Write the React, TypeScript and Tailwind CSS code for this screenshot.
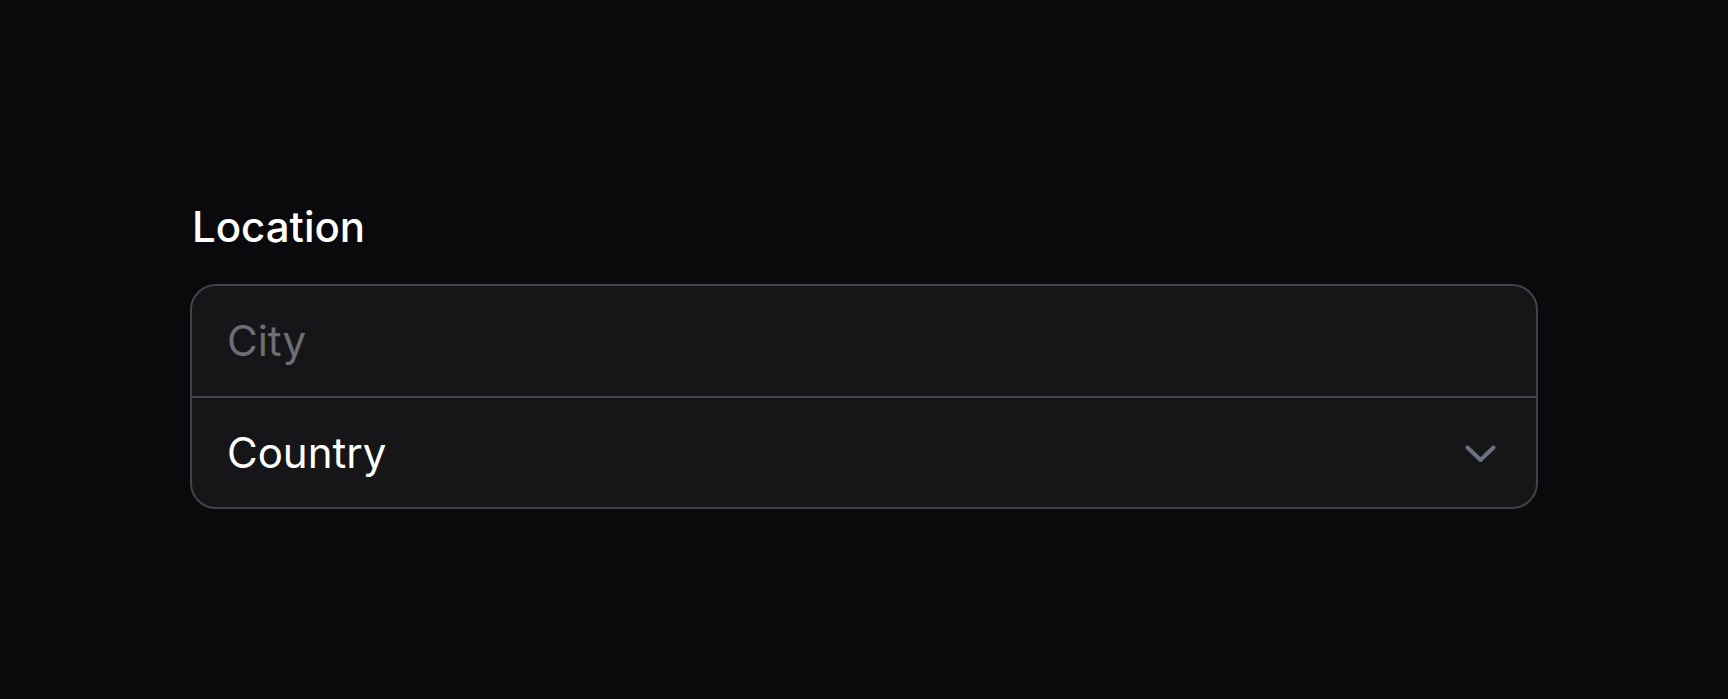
import React from "react";

export default function App() {
  return (
    <div
      className="min-h-[699px] w-full bg-[#0a0a0c] pt-[203px]"
      style={{ fontFamily: "Inter, 'Noto Sans', sans-serif" }}
    >
      <div className="mx-auto w-[1348px]">
        <label className="block text-[42px] leading-[48px] font-[450] text-white pl-[2px]">
          Location
        </label>
        <div className="mt-[33px] overflow-hidden rounded-[26px] border-[2.5px] border-[#424248] bg-[#161618]">
          <div className="flex h-[112px] items-center border-b-[2.5px] border-[#424248] pl-[35px] pr-[40px]">
            <input
              type="text"
              placeholder="City"
              className="w-full bg-transparent text-[42px] leading-[48px] text-white outline-none placeholder:text-[#6e6e75]"
            />
          </div>
          <div className="flex h-[109px] items-center justify-between pl-[35px] pr-[40px]">
            <span className="text-[42px] leading-[48px] text-white">Country</span>
            <svg width="31" height="18" viewBox="0 0 31 18" fill="none" className="mt-[2px]">
              <polyline
                points="2.5,2.5 15.5,15 28.5,2.5"
                stroke="#6b7280"
                strokeWidth="4"
                strokeLinecap="round"
                strokeLinejoin="round"
              />
            </svg>
          </div>
        </div>
      </div>
    </div>
  );
}
